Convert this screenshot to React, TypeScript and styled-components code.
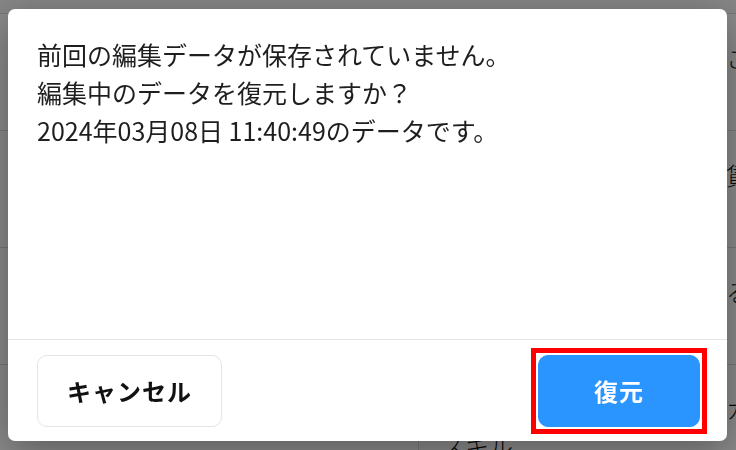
import styled, { createGlobalStyle } from 'styled-components';

const GlobalStyle = createGlobalStyle`
    html, body {
        margin: 0;
        padding: 0;
        background: #ffffff;
        font-family: "Noto Sans CJK JP", "Noto Sans", sans-serif;
        color: #222222;
    }
`;

const Page = styled.div`
    width: 736px;
    height: 450px;
    overflow: hidden;
    display: flex;
    flex-direction: column;
`;

const TopBar = styled.div`
    height: 13px;
    flex-shrink: 0;
    background: #f7f7f7;
    border-bottom: 1px solid #dcdcdc;
`;

const Row = styled.div`
    height: 116px;
    flex-shrink: 0;
    display: flex;
    border-bottom: 1px solid #dcdcdc;
`;

const LabelCell = styled.div`
    width: 418px;
    flex-shrink: 0;
    border-right: 1px solid #dcdcdc;
`;

const ValueCell = styled.div`
    flex: 1;
    min-width: 0;
    overflow: hidden;
    padding: 26px 0 0 22px;
    font-size: 24px;
    line-height: 36px;
    white-space: nowrap;
    font-weight: 300;
    color: #111111;
`;

const ValueText = styled.div<{ $offset?: number }>`
    margin-left: ${(p) => p.$offset ?? 0}px;
`;

const Backdrop = styled.div`
    position: fixed;
    inset: 0;
    background: rgba(0, 0, 0, 0.46);
    display: flex;
    align-items: flex-start;
    justify-content: flex-start;
    padding: 9px 0 0 8px;
`;

const Dialog = styled.div`
    width: 719px;
    height: 432px;
    background: #ffffff;
    border-radius: 7px;
    box-shadow: 0 10px 40px rgba(0, 0, 0, 0.35);
    display: flex;
    flex-direction: column;
    overflow: hidden;
`;

const Body = styled.div`
    flex: 1;
    padding: 26px 29px 0;
    font-size: 25px;
    line-height: 38px;
    color: #1e1e1e;
`;

const Line = styled.p`
    margin: 0;
`;

const Footer = styled.div`
    height: 101px;
    border-top: 1px solid #e4e4e4;
    padding: 0 20px 0 29px;
    display: flex;
    align-items: center;
    justify-content: space-between;
`;

const FocusRing = styled.div`
    border: 5px solid #ff0000;
    padding: 2px;
    display: flex;
`;

const Button = styled.button<{ $primary?: boolean; $width: number }>`
    width: ${(p) => p.$width}px;
    height: 72px;
    border-radius: 10px;
    font-family: "Noto Sans CJK JP", "Noto Sans", sans-serif;
    font-size: 24px;
    font-weight: 700;
    letter-spacing: 1px;
    cursor: pointer;
    outline: none;
    border: 1px solid ${(p) => (p.$primary ? '#2b95ff' : '#e1e5ea')};
    background: ${(p) => (p.$primary ? '#2b95ff' : '#ffffff')};
    color: ${(p) => (p.$primary ? '#ffffff' : '#111111')};
`;

export default function App() {
    return (
        <>
            <GlobalStyle />
            <Page>
                <TopBar />
                <Row>
                    <LabelCell />
                    <ValueCell>
                        <ValueText $offset={285}>こちら</ValueText>
                    </ValueCell>
                </Row>
                <Row>
                    <LabelCell />
                    <ValueCell>
                        <ValueText $offset={285}>賃金</ValueText>
                    </ValueCell>
                </Row>
                <Row>
                    <LabelCell />
                    <ValueCell>
                        <ValueText $offset={285}>る</ValueText>
                    </ValueCell>
                </Row>
                <Row>
                    <LabelCell />
                    <ValueCell>
                        <ValueText $offset={285}>カ</ValueText>
                        <ValueText>スキル</ValueText>
                    </ValueCell>
                </Row>
            </Page>
            <Backdrop>
                <Dialog>
                    <Body>
                        <Line>前回の編集データが保存されていません。</Line>
                        <Line>編集中のデータを復元しますか？</Line>
                        <Line>2024年03月08日 11:40:49のデータです。</Line>
                    </Body>
                    <Footer>
                        <Button $width={185}>キャンセル</Button>
                        <FocusRing>
                            <Button $primary $width={162}>復元</Button>
                        </FocusRing>
                    </Footer>
                </Dialog>
            </Backdrop>
        </>
    );
}
